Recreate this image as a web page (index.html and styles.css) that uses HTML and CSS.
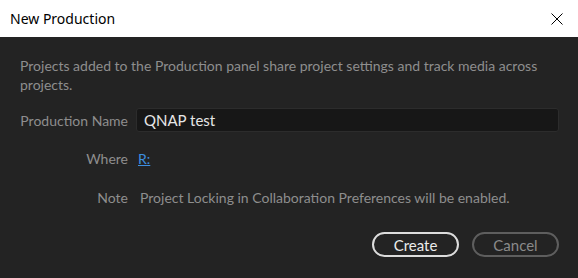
FILE: index.html
```html
<!DOCTYPE html>
<html lang="en">
<head>
    <meta charset="UTF-8">
    <title>New Production</title>
    <link rel="stylesheet" href="styles.css">
</head>
<body>
    <div class="dialog">
        <div class="titlebar">
            <span class="title">New Production</span>
            <button class="close-btn" aria-label="Close">
                <svg width="12" height="12" viewBox="0 0 12 12">
                    <path d="M0.5 0.5 L11.5 11.5 M11.5 0.5 L0.5 11.5" stroke="#000" stroke-width="1" fill="none"/>
                </svg>
            </button>
        </div>
        <div class="content">
            <p class="description">Projects added to the Production panel share project settings and track media across projects.</p>
            <div class="form">
                <label class="label">Production Name</label>
                <div class="input">QNAP test</div>
                <span class="label">Where</span>
                <a class="link" href="#">R:</a>
                <span class="label note">Note</span>
                <span class="value note">Project Locking in Collaboration Preferences will be enabled.</span>
            </div>
            <div class="actions">
                <button class="btn primary">Create</button>
                <button class="btn secondary">Cancel</button>
            </div>
        </div>
    </div>
</body>
</html>
```

FILE: styles.css
```css
* {
    margin: 0;
    padding: 0;
    box-sizing: border-box;
}

body {
    font-family: 'Lato', sans-serif;
    background: #232323;
    width: 578px;
    height: 278px;
    overflow: hidden;
}

.titlebar {
    height: 37px;
    background: #ffffff;
    display: flex;
    align-items: center;
    justify-content: space-between;
    padding: 0 15px 0 10px;
}

.title {
    font-family: 'Noto Sans', sans-serif;
    font-size: 14px;
    color: #000;
}

.close-btn {
    background: none;
    border: none;
    width: 12px;
    height: 12px;
    display: flex;
}

.content {
    padding: 19px 19px 0 20px;
    color: #8e8e8e;
    font-size: 14px;
}

.description {
    line-height: 19px;
    margin-bottom: 14px;
}

.form {
    display: grid;
    grid-template-columns: 108px 1fr;
    column-gap: 8px;
    row-gap: 15px;
    align-items: center;
}

.label {
    text-align: right;
}

.input {
    height: 24px;
    background: #171717;
    border: 1px solid #2c2c2c;
    border-radius: 3px;
    color: #e6e6e6;
    padding: 0 7px;
    line-height: 22px;
    font-size: 15px;
}

.link {
    color: #3d8fe0;
    text-decoration: underline;
    justify-self: start;
    margin-left: 2px;
    line-height: 23px;
}

.value {
    margin-left: 4px;
    line-height: 23px;
}

.note {
    margin-top: 1px;
}

.actions {
    display: flex;
    justify-content: flex-end;
    gap: 13px;
    margin-top: 23px;
}

.btn {
    width: 87px;
    height: 25px;
    border-radius: 13px;
    background: transparent;
    font-family: 'Lato', sans-serif;
    font-size: 15px;
}

.btn.primary {
    border: 2px solid #dcdcdc;
    color: #ebebeb;
}

.btn.secondary {
    border: 2px solid #5e5e5e;
    color: #8a8a8a;
}
```
